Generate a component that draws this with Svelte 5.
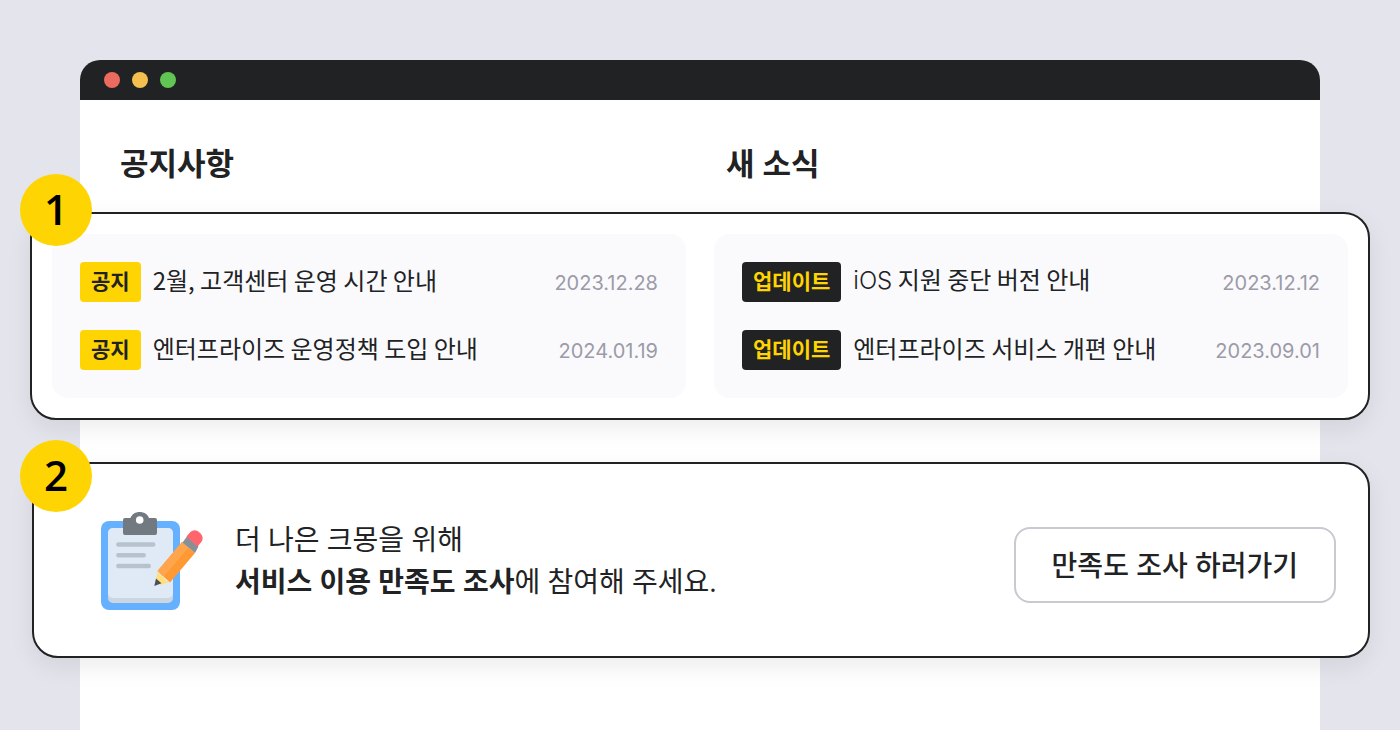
<script>
  const groups = [
    {
      kind: 'notice',
      title: '공지사항',
      items: [
        { tag: '공지', title: '2월, 고객센터 운영 시간 안내', date: '2023.12.28' },
        { tag: '공지', title: '엔터프라이즈 운영정책 도입 안내', date: '2024.01.19' }
      ]
    },
    {
      kind: 'update',
      title: '새 소식',
      items: [
        { tag: '업데이트', latin: 'iOS', title: ' 지원 중단 버전 안내', date: '2023.12.12' },
        { tag: '업데이트', title: '엔터프라이즈 서비스 개편 안내', date: '2023.09.01' }
      ]
    }
  ];
</script>

<main class="window">
  <header class="titlebar">
    <span class="dot red"></span>
    <span class="dot amber"></span>
    <span class="dot green"></span>
  </header>

  <div class="headings">
    {#each groups as group}
      <h2 id={group.kind}>{group.title}</h2>
    {/each}
  </div>

  <section class="panel boards">
    <span class="step">1</span>
    {#each groups as group}
      <ul class="board {group.kind}" aria-labelledby={group.kind}>
        {#each group.items as item}
          <li>
            <span class="tag">{item.tag}</span>
            <span class="title">{#if item.latin}<span class="latin">{item.latin}</span>{/if}{item.title}</span>
            <time>{item.date}</time>
          </li>
        {/each}
      </ul>
    {/each}
  </section>

  <section class="panel survey">
    <span class="step">2</span>
    <svg class="clipboard" viewBox="0 0 104 100" aria-hidden="true">
      <rect x="1" y="10" width="79" height="89" rx="8" fill="#66b1ff" />
      <rect x="8" y="17" width="65" height="75" rx="5" fill="#ccd6e0" />
      <path d="M13 17h55a5 5 0 0 1 5 5v60a5 5 0 0 1-5 5H13a5 5 0 0 1-5-5V22a5 5 0 0 1 5-5z" fill="#dfeaf6" />
      <path
        d="M24 7h6.500C32 3 35.500 1 39.700 1S47.500 3 49 7h6a2 2 0 0 1 2 2v13a2 2 0 0 1-2 2H25a2 2 0 0 1-2-2V9a2 2 0 0 1 2-2z"
        fill="#737981"
      />
      <circle cx="39.700" cy="9" r="3.800" fill="#fff" />
      <path d="M18.300 33.500h35M18.300 44.200h25.500M18.300 55h30.500" stroke="#b7c3cc" stroke-width="4.400" stroke-linecap="round" />
      <path d="M57.500 60 L82 31 L95 42 L70 71.500 Z" fill="#ff9933" />
      <path d="M57.500 60 L82 31 L88.500 36.500 L63.500 66 Z" fill="#ffa64d" />
      <path d="M58 59.500 L59.500 64 L64 65.500 L65 69.500 L70 71 L60.500 74 L55.500 69.500 Z" fill="#ffe07d" />
      <path d="M56 67.500 L61.500 72.300 L54.300 75 Z" fill="#4b5056" />
      <path d="M87 25.500 L98.500 35.500 L95 42 L82.500 31.500 Z" fill="#898f96" />
      <path d="M86.500 25.500 L89.500 22 C92.500 18.500 96 18.500 99.500 21.500 C103.500 25 103.500 28.500 100.500 32 L97.500 35.500 Z" fill="#ff656d" />
    </svg>
    <p class="copy">더 나은 크몽을 위해<br /><strong>서비스 이용 만족도 조사</strong>에 참여해 주세요.</p>
    <button type="button">만족도 조사 하러가기</button>
  </section>
</main>

<style>
  :global(body) {
    background: #e4e4ed;
    color: #212224;
    font-family: 'Noto Sans CJK KR', sans-serif;
  }
  :global(#app) {
    display: flex;
    box-sizing: border-box;
    min-height: 100vh;
    padding: 60px 80px 0;
  }
  .window {
    flex: 1;
    min-width: 0;
    background: #fff;
    border-radius: 20px 20px 0 0;
  }
  .titlebar {
    display: flex;
    align-items: center;
    gap: 12px;
    height: 40px;
    padding: 0 24px;
    background: #212224;
    border-radius: 20px 20px 0 0;
  }
  .dot {
    width: 16px;
    height: 16px;
    border-radius: 50%;
  }
  .red { background: #ed6a5e; }
  .amber { background: #f5bf4f; }
  .green { background: #61c554; }

  .headings {
    display: grid;
    grid-template-columns: 1fr 1fr;
    gap: 52px;
    padding: 40px 40px 26px;
  }
  h2 {
    margin: 0;
    font: 700 31px/46px 'Open Sans', 'Noto Sans CJK KR', sans-serif;
  }

  .panel {
    position: relative;
    background: #fff;
    border: 2px solid #212224;
    border-radius: 26px;
    box-shadow: 0 8px 24px rgba(0, 0, 0, 0.08);
  }
  .step {
    position: absolute;
    top: -40px;
    left: -12px;
    width: 72px;
    height: 72px;
    border-radius: 50%;
    background: #ffd403;
    color: #000;
    font: 600 42px/70px 'Open Sans', sans-serif;
    text-align: center;
  }

  .boards {
    display: grid;
    grid-template-columns: 1fr 1fr;
    gap: 28px;
    margin: 0 -50px;
    padding: 20px;
  }
  .board {
    display: grid;
    gap: 28px;
    margin: 0;
    padding: 28px;
    border-radius: 16px;
    background: #fafafc;
    list-style: none;
  }
  li {
    display: flex;
    align-items: center;
    gap: 12px;
    height: 40px;
    white-space: nowrap;
  }
  .tag {
    padding: 0 11px 4px;
    border-radius: 4px;
    background: #ffd403;
    font-size: 21px;
    line-height: 36px;
    font-weight: 700;
  }
  .update .tag {
    background: #212224;
    color: #ffd403;
  }
  .title {
    flex: 1;
    padding-bottom: 4px;
    font-size: 24px;
    line-height: 36px;
  }
  .latin {
    font-family: Inter, sans-serif;
    font-weight: 300;
  }
  time {
    padding-top: 2px;
    color: #9c9ba9;
    font: 400 20px/40px Inter, sans-serif;
  }

  .survey {
    display: flex;
    align-items: center;
    gap: 31px;
    margin: 42px -50px 0 -48px;
    padding: 47px 32px 45px 66px;
  }
  .survey .step {
    left: -14px;
    top: -24px;
  }
  .clipboard {
    flex: none;
    width: 104px;
    height: 100px;
  }
  .copy {
    flex: 1;
    margin: 0;
    padding-bottom: 2px;
    font: 400 28px/42px 'Open Sans', 'Noto Sans CJK KR', sans-serif;
  }
  .copy strong {
    font-weight: 700;
  }
  button {
    margin: 8px 0 0;
    padding: 0 36px;
    border: 2px solid #c8cad2;
    border-radius: 16px;
    background: #fff;
    color: #212224;
    font: 500 28px/72px 'Open Sans', 'Noto Sans CJK KR', sans-serif;
    white-space: nowrap;
  }
</style>
